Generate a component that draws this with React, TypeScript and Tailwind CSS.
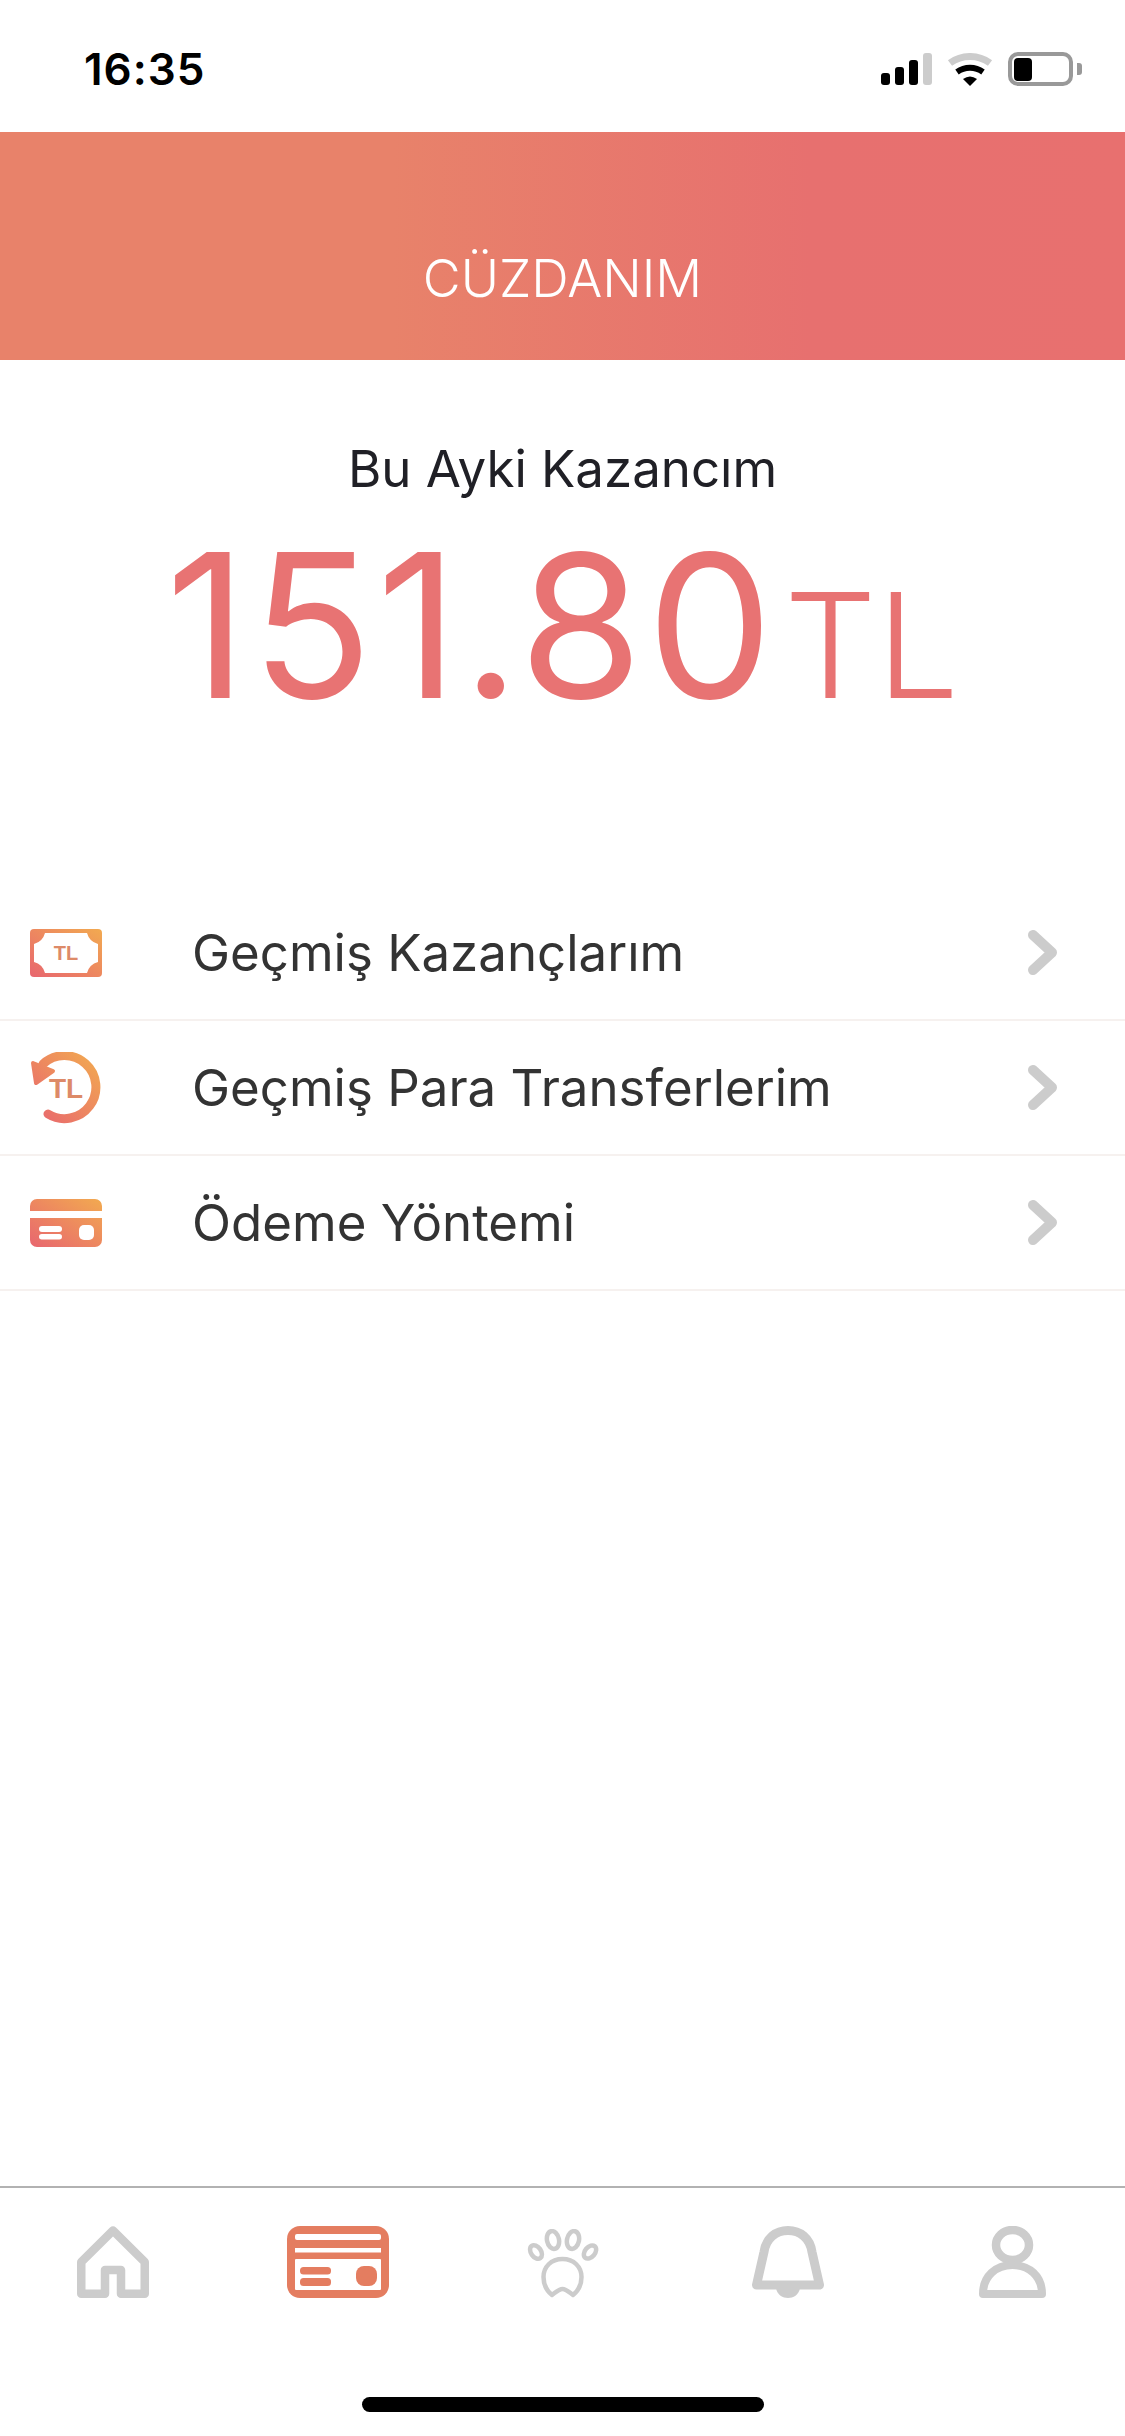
const rows = [
  { label: 'Geçmiş Kazançlarım', icon: <MoneyIcon /> },
  { label: 'Geçmiş Para Transferlerim', icon: <HistoryIcon /> },
  { label: 'Ödeme Yöntemi', icon: <CardIcon /> },
];

function Grad({ id }: { id: string }) {
  return (
    <defs>
      <linearGradient id={id} x1="0" y1="1" x2="1" y2="0">
        <stop offset="0" stopColor="#e8666f" />
        <stop offset="1" stopColor="#f2aa50" />
      </linearGradient>
    </defs>
  );
}

function MoneyIcon() {
  return (
    <svg width="72" height="48" viewBox="0 0 72 48">
      <Grad id="money" />
      <rect width="72" height="48" rx="4" fill="url(#money)" />
      <path d="M15 4H57A15.5 15.5 0 0 0 68 15V33A15.5 15.5 0 0 0 57 44H15A15.5 15.5 0 0 0 4 33V15A15.5 15.5 0 0 0 15 4Z" fill="#fff" />
      <text x="36" y="31" textAnchor="middle" fontSize="20" fontWeight="700" fill="#dd8a68" fontFamily="'Liberation Sans', sans-serif">TL</text>
    </svg>
  );
}

function HistoryIcon() {
  return (
    <svg width="72" height="72" viewBox="0 0 72 72">
      <defs>
        <linearGradient id="hist" gradientUnits="userSpaceOnUse" x1="5" y1="70" x2="70" y2="5">
          <stop offset="0" stopColor="#e8666f" />
          <stop offset="1" stopColor="#f2aa50" />
        </linearGradient>
      </defs>
      <path d="M18 62A31.5 31.5 0 1 0 13 12" fill="none" stroke="url(#hist)" strokeWidth="9" strokeLinecap="round" />
      <path d="M3 11L23 19L6 31Z" fill="url(#hist)" stroke="url(#hist)" strokeWidth="4" strokeLinejoin="round" />
      <text x="36" y="46" textAnchor="middle" fontSize="28" fontWeight="700" fill="#dd8a68" fontFamily="'Liberation Sans', sans-serif">TL</text>
    </svg>
  );
}

function CardIcon() {
  return (
    <svg width="72" height="48" viewBox="0 0 72 48">
      <Grad id="card" />
      <path d="M0 12V7A7 7 0 0 1 7 0H65A7 7 0 0 1 72 7V12ZM0 19H72V41A7 7 0 0 1 65 48H7A7 7 0 0 1 0 41Z" fill="url(#card)" />
      <rect x="9" y="27" width="23" height="6" rx="3" fill="#fff" />
      <rect x="9" y="35" width="23" height="5.5" rx="2.75" fill="#fff" />
      <rect x="49" y="26" width="15" height="15" rx="5" fill="#fff" />
    </svg>
  );
}

function Chevron() {
  return (
    <svg width="29" height="45" viewBox="0 0 29 45">
      <path d="M5 5L24 22.5L5 40" fill="none" stroke="#cccccc" strokeWidth="10" strokeLinecap="round" strokeLinejoin="round" />
    </svg>
  );
}

function HomeTab() {
  return (
    <svg width="72" height="72" viewBox="0 0 72 72">
      <path d="M4.25 67.75V36L36 4.5L67.75 36V67.75H44V44H28V67.75Z" fill="none" stroke="#cccccc" strokeWidth="8.5" strokeLinejoin="round" />
    </svg>
  );
}

function WalletTab() {
  return (
    <svg width="102" height="72" viewBox="0 0 102 72">
      <rect width="102" height="72" rx="13" fill="#e47d60" />
      <rect x="8" y="8" width="86" height="6" rx="2" fill="#fff" />
      <rect x="8" y="22" width="86" height="4.5" fill="#fff" />
      <rect x="8" y="33" width="86" height="31" rx="1" fill="#fff" />
      <rect x="13" y="41" width="31" height="7.5" rx="3.5" fill="#e47d60" />
      <rect x="13" y="52" width="31" height="8" rx="3.5" fill="#e47d60" />
      <rect x="69" y="40" width="21" height="20" rx="8" fill="#e47d60" />
    </svg>
  );
}

function PawTab() {
  return (
    <svg width="72" height="69" viewBox="0 0 72 69">
      <g fill="none" stroke="#cccccc" strokeWidth="4.5">
        <ellipse cx="9" cy="23" rx="5" ry="7.5" transform="rotate(-35 9 23)" />
        <ellipse cx="26" cy="11" rx="6" ry="9" transform="rotate(-12 26 11)" />
        <ellipse cx="46" cy="11" rx="6" ry="9" transform="rotate(12 46 11)" />
        <ellipse cx="63" cy="23" rx="5" ry="7.5" transform="rotate(40 63 23)" />
        <path d="M35.5 30C24 30 16.5 38 16.5 48C16.5 56 20 62 25 66C29 63 32 60 35.5 60C39 60 42 63 46 66C51 62 54.5 56 54.5 48C54.5 38 47 30 35.5 30Z" strokeLinejoin="round" />
      </g>
    </svg>
  );
}

function BellTab() {
  return (
    <svg width="72" height="72" viewBox="0 0 72 72">
      <path d="M4.5 59L12 26C14 12 24 4.5 36 4.5C48 4.5 58 12 60 26L67.5 59Z" fill="none" stroke="#cccccc" strokeWidth="9" strokeLinejoin="round" />
      <path d="M24 62C25 69 31 72 36 72C41 72 47 69 48 62Z" fill="#cccccc" />
    </svg>
  );
}

function PersonTab() {
  return (
    <svg width="67" height="72" viewBox="0 0 67 72">
      <ellipse cx="33.5" cy="19" rx="16.5" ry="15" fill="none" stroke="#cccccc" strokeWidth="8.5" />
      <path d="M4 68H63C63 50 50 39 33.5 39C17 39 4 50 4 68Z" fill="none" stroke="#cccccc" strokeWidth="8" strokeLinejoin="round" />
    </svg>
  );
}

function WifiIcon() {
  return (
    <svg width="46" height="33" viewBox="0 0 46 33">
      <path d="M3 10A34 34 0 0 1 43 10" fill="none" stroke="#cccccc" strokeWidth="7" />
      <path d="M10 19A22.5 22.5 0 0 1 36 19" fill="none" stroke="#000" strokeWidth="6" />
      <path d="M23 33L16 26Q23 21 30 26Z" fill="#000" />
    </svg>
  );
}

export default function App() {
  return (
    <div className="flex h-[2436px] w-[1125px] flex-col overflow-hidden bg-white font-['Inter',sans-serif]">
      {/* Status bar */}
      <div className="flex h-[132px] shrink-0 items-start justify-between pl-[84px] pr-[43px] pt-[52px]">
        <span className="text-[44px] font-semibold leading-[34px] tracking-[1px] text-black">16:35</span>
        <div className="flex h-[34px] items-center">
          <div className="flex h-[32px] items-end gap-[5px]">
            <div className="h-[12px] w-[9px] rounded-[3px] bg-black" />
            <div className="h-[18px] w-[9px] rounded-[3px] bg-black" />
            <div className="h-[25px] w-[9px] rounded-[3px] bg-black" />
            <div className="h-[32px] w-[9px] rounded-[3px] bg-[#cccccc]" />
          </div>
          <div className="ml-[15px] mr-[15px] flex">
            <WifiIcon />
          </div>
          <div className="flex h-[34px] w-[65px] items-center rounded-[10px] border-[4px] border-[#999999] pl-[2px]">
            <div className="h-[23px] w-[18px] rounded-[4px] bg-black" />
          </div>
          <div className="ml-[4px] h-[12px] w-[5px] rounded-r-[3px] bg-[#999999]" />
        </div>
      </div>

      {/* Header */}
      <div className="flex h-[228px] shrink-0 items-end justify-center bg-[linear-gradient(90deg,#e8826a_0%,#e8826a_35%,#e7706f_72%,#e8706f_100%)] pb-[56px]">
        <h1 className="text-[52px] font-light leading-[50px] text-white">CÜZDANIM</h1>
      </div>

      {/* Earnings */}
      <div className="flex h-[526px] shrink-0 flex-col items-center pt-[79px]">
        <p className="text-[51px] leading-[60px] text-[#202026]">Bu Ayki Kazancım</p>
        <div className="mt-[31px] flex items-baseline gap-[7px] text-[#e87373]">
          <span className="text-[200px] font-normal leading-[190px] tracking-[4px]">151.80</span>
          <span className="text-[146px] font-light leading-[190px]">TL</span>
        </div>
      </div>

      {/* Menu */}
      <div className="flex flex-col">
        {rows.map((row) => (
          <div key={row.label} className="flex h-[135px] items-center border-b-2 border-[#f6f1ef] pl-[30px] pr-[68px]">
            <div className="flex w-[162px] shrink-0 items-center">{row.icon}</div>
            <span className="flex-1 text-[51px] leading-[60px] text-[#333333]">{row.label}</span>
            <Chevron />
          </div>
        ))}
      </div>

      {/* Tab bar */}
      <div className="mt-auto flex h-[250px] shrink-0 flex-col border-t-2 border-[#b2b2b2]">
        <div className="mt-[38px] grid h-[72px] grid-cols-5 items-end justify-items-center">
          <HomeTab />
          <WalletTab />
          <PawTab />
          <BellTab />
          <PersonTab />
        </div>
        <div className="mx-auto mt-[99px] h-[15px] w-[402px] rounded-full bg-black" />
      </div>
    </div>
  );
}
